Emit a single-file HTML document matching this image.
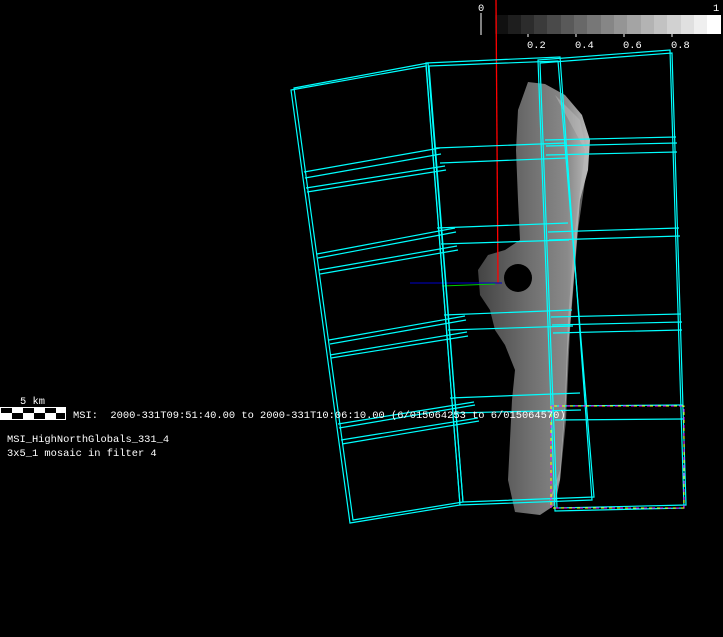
<!DOCTYPE html>
<html><head><style>
html,body{margin:0;padding:0;background:#000;width:723px;height:637px;overflow:hidden}
svg{display:block}
text{font-family:"Liberation Mono",monospace;fill:#fff;font-size:10.4px}
</style></head><body>
<svg width="723" height="637" viewBox="0 0 723 637">
<defs>
<linearGradient id="ast" x1="0" x2="1" y1="0" y2="0">
<stop offset="0" stop-color="#444"/><stop offset="0.45" stop-color="#6e6e6e"/><stop offset="0.8" stop-color="#8a8a8a"/><stop offset="1" stop-color="#bdbdbd"/>
</linearGradient>
</defs>
<g>
<rect x="495" y="15" width="14" height="19" fill="#111"/>
<rect x="508" y="15" width="14" height="19" fill="#1e1e1e"/>
<rect x="521" y="15" width="14" height="19" fill="#2c2c2c"/>
<rect x="534" y="15" width="14" height="19" fill="#3b3b3b"/>
<rect x="547" y="15" width="14" height="19" fill="#4a4a4a"/>
<rect x="561" y="15" width="14" height="19" fill="#595959"/>
<rect x="574" y="15" width="14" height="19" fill="#686868"/>
<rect x="587" y="15" width="14" height="19" fill="#777"/>
<rect x="601" y="15" width="14" height="19" fill="#868686"/>
<rect x="614" y="15" width="14" height="19" fill="#959595"/>
<rect x="627" y="15" width="14" height="19" fill="#a4a4a4"/>
<rect x="641" y="15" width="14" height="19" fill="#b3b3b3"/>
<rect x="654" y="15" width="14" height="19" fill="#c2c2c2"/>
<rect x="667" y="15" width="14" height="19" fill="#d1d1d1"/>
<rect x="681" y="15" width="14" height="19" fill="#e0e0e0"/>
<rect x="694" y="15" width="14" height="19" fill="#efefef"/>
<rect x="707" y="15" width="14" height="19" fill="#fff"/>
<line x1="481" y1="13" x2="481" y2="35" stroke="#fff"/>
<g stroke="#fff"><line x1="528" y1="34" x2="528" y2="37"/><line x1="576" y1="34" x2="576" y2="37"/><line x1="624" y1="34" x2="624" y2="37"/><line x1="672" y1="34" x2="672" y2="37"/></g>
<text x="478" y="11">0</text><text x="713" y="11">1</text>
<text x="527" y="48">0.2</text><text x="575" y="48">0.4</text><text x="623" y="48">0.6</text><text x="671" y="48">0.8</text>
</g>
<path d="M528,82 L545,84 L565,95 L582,115 L590,140 L588,170 L580,200 L576,250 L572,300 L568,350 L566,400 L563,440 L560,480 L555,505 L540,515 L515,512 L508,480 L510,440 L512,400 L515,370 L505,345 L495,330 L490,310 L480,295 L478,270 L488,255 L505,250 L520,240 L518,200 L516,150 L518,110 Z" fill="url(#ast)"/>
<path d="M555,95 L580,120 L588,160 L578,230 L570,330 L566,420 L560,480 L548,505 L560,470 L565,400 L568,320 L575,230 L585,150 Z" fill="#bbb" opacity="0.5"/>
<ellipse cx="518" cy="278" rx="14" ry="14" fill="#000"/>
<line x1="496" y1="0" x2="498" y2="283" stroke="#f00" stroke-width="1.3"/>
<line x1="410" y1="283" x2="502" y2="283" stroke="#00c" stroke-width="1"/>
<line x1="442" y1="286" x2="495" y2="284" stroke="#0c0" stroke-width="1"/>
<g fill="none" stroke="#0ff" stroke-width="1.2">
<polygon points="291,90 426,66 460,505 350,523"/>
<polygon points="294,88 428,63 463,502 353,520"/>
<line x1="304" y1="172" x2="440" y2="148"/><line x1="305" y1="178" x2="441" y2="154"/>
<line x1="306" y1="188" x2="445" y2="166"/><line x1="307" y1="192" x2="446" y2="170"/>
<line x1="317" y1="254" x2="455" y2="228"/><line x1="318" y1="258" x2="456" y2="232"/>
<line x1="319" y1="270" x2="457" y2="246"/><line x1="320" y1="274" x2="458" y2="250"/>
<line x1="329" y1="340" x2="465" y2="316"/><line x1="330" y1="344" x2="466" y2="320"/>
<line x1="330" y1="355" x2="467" y2="332"/><line x1="331" y1="358" x2="468" y2="336"/>
<line x1="338" y1="424" x2="474" y2="402"/><line x1="339" y1="428" x2="475" y2="405"/>
<line x1="341" y1="440" x2="478" y2="418"/><line x1="342" y1="444" x2="479" y2="421"/>
<polygon points="426,63 560,57 592,500 460,505"/>
<polygon points="429,66 558,61 594,497 463,502"/>
<line x1="436" y1="148" x2="566" y2="143"/><line x1="440" y1="163" x2="567" y2="158"/>
<line x1="437" y1="228" x2="568" y2="223"/><line x1="441" y1="244" x2="569" y2="240"/>
<line x1="444" y1="315" x2="572" y2="310"/><line x1="448" y1="330" x2="573" y2="326"/>
<line x1="450" y1="398" x2="580" y2="393"/><line x1="454" y1="413" x2="581" y2="410"/>
<polygon points="538,60 670,50 684,508 555,511"/>
<polygon points="540,63 672,53 686,505 557,508"/>
<line x1="545" y1="140" x2="676" y2="137"/><line x1="546" y1="146" x2="677" y2="143"/>
<line x1="546" y1="155" x2="677" y2="152"/>
<line x1="548" y1="232" x2="679" y2="228"/><line x1="549" y1="240" x2="680" y2="236"/>
<line x1="551" y1="317" x2="681" y2="314"/><line x1="552" y1="325" x2="682" y2="322"/>
<line x1="553" y1="333" x2="682" y2="330"/>
<line x1="555" y1="406" x2="683" y2="405"/><line x1="555" y1="420" x2="683" y2="419"/>
</g>
<rect x="551" y="406" width="133" height="102" fill="none" stroke="#f0f" stroke-width="1" stroke-dasharray="5,3"/>
<rect x="551" y="406" width="133" height="102" fill="none" stroke="#ff0" stroke-width="1" stroke-dasharray="3,5" stroke-dashoffset="5"/>
<text x="20" y="404">5 km</text>
<rect x="0.5" y="407.5" width="65" height="12" fill="#fff" stroke="#fff"/>
<g fill="#000">
<rect x="1" y="408" width="11" height="5"/><rect x="23" y="408" width="11" height="5"/><rect x="45" y="408" width="11" height="5"/>
<rect x="12" y="413" width="11" height="6"/><rect x="34" y="413" width="11" height="6"/><rect x="56" y="413" width="9" height="6"/>
</g>
<text x="73" y="418" xml:space="preserve">MSI:  2000-331T09:51:40.00 to 2000-331T10:06:10.00 (6/015064253 to 6/015064570)</text>
<text x="7" y="442">MSI_HighNorthGlobals_331_4</text>
<text x="7" y="456">3x5_1 mosaic in filter 4</text>
</svg>
</body></html>
